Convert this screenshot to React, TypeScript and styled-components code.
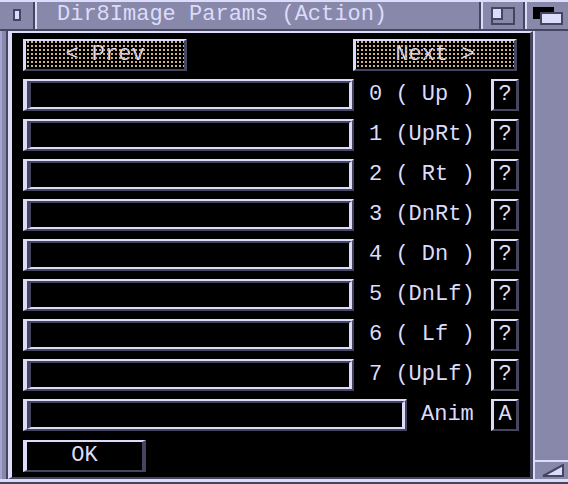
import React from "react";
import styled, { createGlobalStyle } from "styled-components";

const C = {
  grey: "#8888ab",
  light: "#dcdcfa",
  dark: "#45455f",
  edge: "#a4a4d4",
  black: "#000000",
  gold: "#d2b280",
};

const Global = createGlobalStyle`
  html, body { margin: 0; padding: 0; background: #000; }
  body { width: 568px; height: 484px; overflow: hidden; }
  * { box-sizing: border-box; }
`;

const Window = styled.div`
  width: 568px;
  height: 484px;
  display: flex;
  flex-direction: column;
  background: ${C.grey};
  border-bottom: 2px solid ${C.dark};
  font-family: "Liberation Mono", "DejaVu Sans Mono", monospace;
  font-size: 22px;
  color: ${C.light};
`;

const TitleBar = styled.div`
  height: 31px;
  flex: none;
  display: flex;
  border-top: 2px solid ${C.light};
  border-bottom: 2px solid ${C.dark};
`;

const Gadget = styled.div<{ $w: number }>`
  width: ${(p) => p.$w}px;
  flex: none;
  display: flex;
  align-items: center;
  justify-content: center;
`;

const Sep = styled.div`
  width: 4px;
  flex: none;
  border-left: 2px solid ${C.dark};
  border-right: 2px solid ${C.light};
`;

const CloseIcon = styled.div`
  width: 8px;
  height: 12px;
  margin-top: -2px;
  border: 2px solid ${C.dark};
  background: ${C.light};
`;

const Title = styled.div`
  flex: 1;
  padding-left: 20px;
  line-height: 25px;
  white-space: pre;
`;

const Body = styled.div`
  flex: 1;
  display: flex;
  border-bottom: 3px solid ${C.light};
`;

const LeftFrame = styled.div`
  width: 8px;
  flex: none;
  border-left: 2px solid ${C.edge};
  border-right: 2px solid ${C.dark};
`;

const Interior = styled.div`
  width: 525px;
  flex: none;
  background: ${C.black};
  border-top: 2px solid ${C.light};
  border-left: 4px solid ${C.light};
  border-right: 3px solid ${C.dark};
  border-bottom: 2px solid ${C.dark};
  padding: 6px 11px 5px 11px;
  display: flex;
  flex-direction: column;
  gap: 8px;
`;

const RightColumn = styled.div`
  flex: 1;
  display: flex;
  flex-direction: column;
  border-left: 2px solid ${C.light};
`;

const Spacer = styled.div`
  flex: 1;
`;

const SizeGadget = styled.div`
  height: 19px;
  flex: none;
  border-top: 2px solid ${C.light};
  display: flex;
  align-items: center;
  justify-content: center;
  padding-left: 2px;
`;

const NavRow = styled.div`
  height: 32px;
  display: flex;
  justify-content: space-between;
  padding-right: 2px;
`;

const GhostButton = styled.div`
  position: relative;
  width: 164px;
  height: 32px;
  background: ${C.black};
  border-top: 2px solid ${C.light};
  border-left: 3px solid ${C.light};
  border-right: 3px solid ${C.dark};
  border-bottom: 2px solid ${C.dark};
  display: flex;
  align-items: center;
  justify-content: center;
  line-height: 28px;
  white-space: pre;
  &::after {
    content: "";
    position: absolute;
    inset: 0;
    background-image: conic-gradient(
      from 90deg at 2px 2px,
      transparent 0 50%,
      ${C.gold} 50% 75%,
      transparent 75% 100%
    );
    background-size: 4px 4px;
    background-position: 1px 0px;
  }
`;

const Row = styled.div`
  height: 32px;
  display: flex;
  align-items: stretch;
`;

const Field = styled.div<{ $w: number }>`
  width: ${(p) => p.$w}px;
  flex: none;
  display: flex;
  border-top: 2px solid ${C.light};
  border-left: 4px solid ${C.light};
  border-bottom: 2px solid ${C.dark};
  border-right: 2px solid ${C.dark};
`;

const FieldWell = styled.div`
  flex: 1;
  background: ${C.black};
  border-top: 2px solid ${C.dark};
  border-left: 4px solid ${C.dark};
  border-bottom: 2px solid ${C.light};
  border-right: 3px solid ${C.light};
`;

const Label = styled.div<{ $gap: number }>`
  flex: 1;
  margin-left: ${(p) => p.$gap}px;
  line-height: 32px;
  white-space: pre;
`;

const SmallButton = styled.div`
  width: 28px;
  flex: none;
  border-top: 2px solid ${C.light};
  border-left: 3px solid ${C.light};
  border-bottom: 2px solid ${C.dark};
  border-right: 3px solid ${C.dark};
  display: flex;
  align-items: center;
  justify-content: center;
  line-height: 28px;
`;

const OkButton = styled.div`
  width: 123px;
  height: 32px;
  margin-top: 1px;
  border-top: 2px solid ${C.light};
  border-left: 4px solid ${C.light};
  border-bottom: 2px solid ${C.dark};
  border-right: 4px solid ${C.dark};
  display: flex;
  align-items: center;
  justify-content: center;
  line-height: 28px;
`;

const dirs = ["( Up )", "(UpRt)", "( Rt )", "(DnRt)", "( Dn )", "(DnLf)", "( Lf )", "(UpLf)"];

export default function App() {
  return (
    <>
      <Global />
      <Window>
        <TitleBar>
          <Gadget $w={33}>
            <CloseIcon />
          </Gadget>
          <Sep />
          <Title>Dir8Image Params (Action)</Title>
          <Sep />
          <Gadget $w={40}>
            <svg width="24" height="18" viewBox="0 0 24 18">
              <rect x="1" y="1" width="22" height="16" fill="none" stroke={C.dark} strokeWidth="2" />
              <rect x="1" y="1" width="10" height="11" fill={C.light} stroke={C.dark} strokeWidth="2" />
            </svg>
          </Gadget>
          <Sep />
          <Gadget $w={41}>
            <svg width="30" height="18" viewBox="0 0 30 18">
              <rect x="0" y="0" width="21" height="12" fill={C.black} />
              <rect x="8" y="6" width="21" height="11" fill={C.light} stroke={C.dark} strokeWidth="2" />
            </svg>
          </Gadget>
        </TitleBar>
        <Body>
          <LeftFrame />
          <Interior>
            <NavRow>
              <GhostButton>{"< Prev"}</GhostButton>
              <GhostButton>{"Next >"}</GhostButton>
            </NavRow>
            {dirs.map((d, i) => (
              <Row key={i}>
                <Field $w={331}>
                  <FieldWell />
                </Field>
                <Label $gap={15}>{`${i} ${d}`}</Label>
                <SmallButton>?</SmallButton>
              </Row>
            ))}
            <Row>
              <Field $w={384}>
                <FieldWell />
              </Field>
              <Label $gap={14}>Anim</Label>
              <SmallButton>A</SmallButton>
            </Row>
            <OkButton>OK</OkButton>
          </Interior>
          <RightColumn>
            <Spacer />
            <SizeGadget>
              <svg width="22" height="13" viewBox="0 0 22 13">
                <polygon points="1,12 21,12 21,1" fill={C.light} stroke={C.dark} strokeWidth="2" />
              </svg>
            </SizeGadget>
          </RightColumn>
        </Body>
      </Window>
    </>
  );
}
